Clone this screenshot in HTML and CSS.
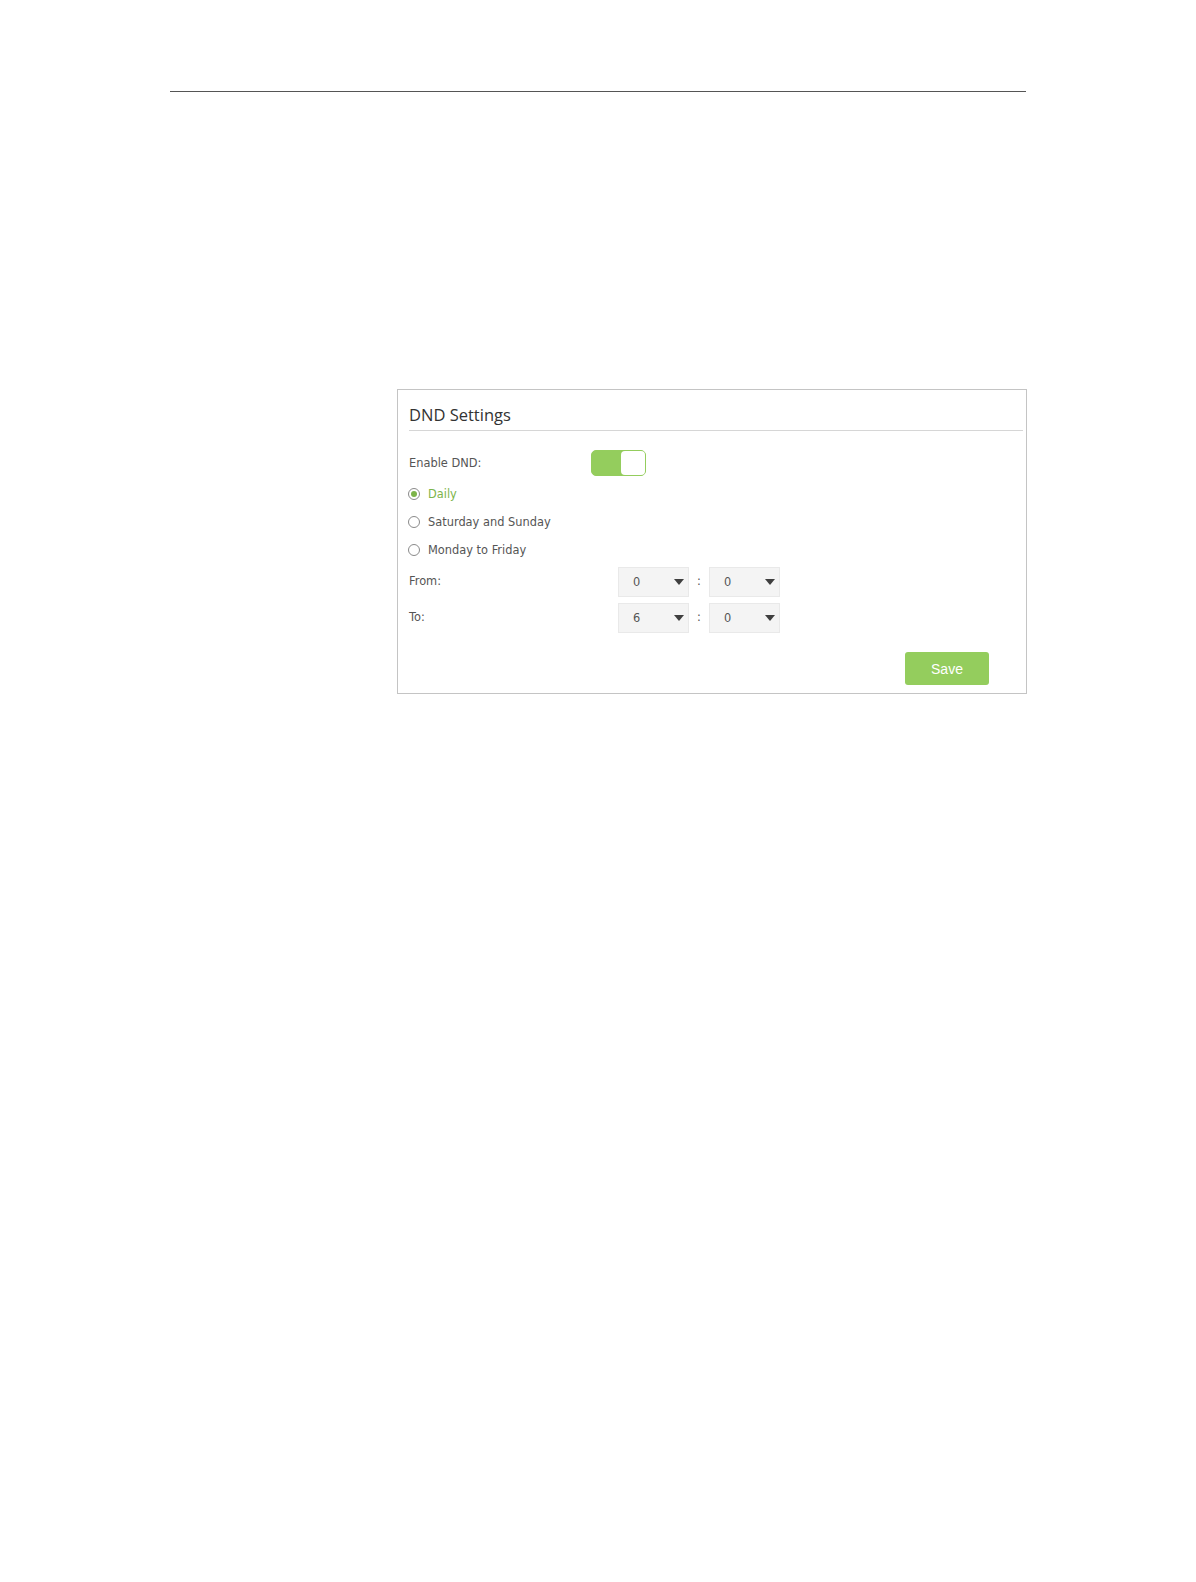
FILE: index.html
```html
<!DOCTYPE html>
<html lang="en">
<head>
    <meta charset="UTF-8">
    <meta name="viewport" content="width=device-width, initial-scale=1.0">
    <title>DND Settings</title>
    <link rel="stylesheet" href="styles.css">
</head>
<body>
    <div class="page-rule"></div>

    <section class="panel">
        <h3 class="panel-title">DND Settings</h3>

        <!-- Enable switch -->
        <div class="row row-switch">
            <span class="field-label switch-label">Enable DND:</span>
            <span class="toggle on"><span class="knob"></span></span>
        </div>

        <!-- Schedule -->
        <div class="row row-radio first">
            <span class="radio checked"></span>
            <span class="radio-text active">Daily</span>
        </div>
        <div class="row row-radio">
            <span class="radio"></span>
            <span class="radio-text">Saturday and Sunday</span>
        </div>
        <div class="row row-radio">
            <span class="radio"></span>
            <span class="radio-text">Monday to Friday</span>
        </div>

        <!-- Time range -->
        <div class="row row-time first">
            <span class="field-label time-label">From:</span>
            <span class="select"><span class="select-value">0</span><span class="caret"></span></span>
            <span class="colon">:</span>
            <span class="select"><span class="select-value">0</span><span class="caret"></span></span>
        </div>
        <div class="row row-time">
            <span class="field-label time-label">To:</span>
            <span class="select"><span class="select-value">6</span><span class="caret"></span></span>
            <span class="colon">:</span>
            <span class="select"><span class="select-value">0</span><span class="caret"></span></span>
        </div>

        <div class="actions">
            <button class="btn-save" type="button">Save</button>
        </div>
    </section>
</body>
</html>
```

FILE: styles.css
```css
body {
    margin: 0;
    background-color: #fff;
    font-family: "DejaVu Sans", Verdana, sans-serif;
    font-size: 11.4px;
    color: #555;
}

.page-rule {
    margin: 91px 0 0 170px;
    width: 856px;
    height: 1px;
    background-color: #555;
}

.panel {
    box-sizing: border-box;
    margin: 297px 0 0 397px;
    width: 630px;
    padding: 0 3px 8px 11px;
    border: 1px solid #c4c4c4;
}

.panel-title {
    margin: 0;
    padding: 13px 0 3px;
    line-height: 24px;
    font-family: "Open Sans", sans-serif;
    font-size: 16.5px;
    font-weight: normal;
    color: #333;
    border-bottom: 1px solid #d6d6d6;
}

.row {
    display: flex;
    align-items: center;
}

.row-switch {
    margin-top: 17px;
    height: 30px;
}

.switch-label {
    width: 182px;
}

.toggle {
    box-sizing: border-box;
    display: flex;
    justify-content: flex-end;
    width: 55px;
    height: 26px;
    border-radius: 5px;
    background-color: #94cd5d;
    border: 1px solid #94cd5d;
}

.knob {
    width: 24px;
    height: 24px;
    border-radius: 4px;
    background-color: #fff;
}

.row-radio {
    height: 28px;
}

.row-radio.first {
    margin-top: 2px;
}

.radio {
    box-sizing: border-box;
    display: flex;
    align-items: center;
    justify-content: center;
    width: 12px;
    height: 12px;
    margin-left: -1px;
    margin-right: 8px;
    border: 1px solid #8a8a8a;
    border-radius: 50%;
}

.radio.checked::after {
    content: "";
    width: 6px;
    height: 6px;
    border-radius: 50%;
    background-color: #7db44a;
}

.radio-text.active {
    color: #7db44a;
}

.row-time {
    height: 30px;
    margin-top: 6px;
}

.row-time.first {
    margin-top: 3px;
}

.time-label {
    width: 209px;
    margin-top: -2px;
}

.select {
    box-sizing: border-box;
    display: flex;
    align-items: center;
    justify-content: space-between;
    width: 71px;
    height: 30px;
    padding: 0 4px 0 14px;
    background-color: #f4f4f4;
    border: 1px solid #e9e9e9;
    color: #555;
}

.caret {
    width: 0;
    height: 0;
    border-left: 5px solid transparent;
    border-right: 5px solid transparent;
    border-top: 6px solid #3f3f3f;
}

.colon {
    width: 20px;
    text-align: center;
    margin-top: -2px;
}

.actions {
    display: flex;
    justify-content: flex-end;
    margin-top: 19px;
    padding-right: 34px;
}

.btn-save {
    width: 84px;
    height: 33px;
    border: none;
    border-radius: 3px;
    background-color: #94cd5d;
    color: #fff;
    font-family: "Liberation Sans", Arial, sans-serif;
    font-size: 14px;
    cursor: pointer;
}
```
